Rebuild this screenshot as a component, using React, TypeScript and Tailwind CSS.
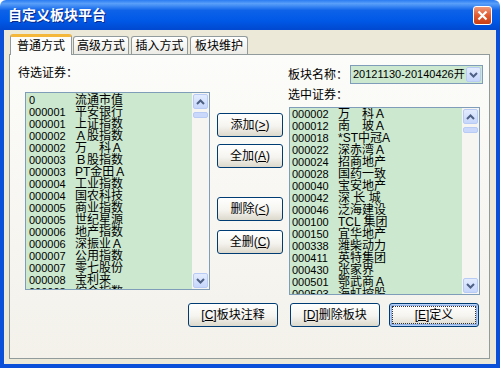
import type { ReactNode } from 'react';

const pending: [string, string][] = [
  ['0', '流通市值'],
  ['000001', '平安银行'],
  ['000001', '上证指数'],
  ['000002', 'Ａ股指数'],
  ['000002', '万　科Ａ'],
  ['000003', 'Ｂ股指数'],
  ['000003', 'PT金田Ａ'],
  ['000004', '工业指数'],
  ['000004', '国农科技'],
  ['000005', '商业指数'],
  ['000005', '世纪星源'],
  ['000006', '地产指数'],
  ['000006', '深振业Ａ'],
  ['000007', '公用指数'],
  ['000007', '零七股份'],
  ['000008', '宝利来'],
  ['000008', '综合指数'],
];

const selected: [string, string][] = [
  ['000002', '万　科Ａ'],
  ['000012', '南　玻Ａ'],
  ['000018', '*ST中冠A'],
  ['000022', '深赤湾Ａ'],
  ['000024', '招商地产'],
  ['000028', '国药一致'],
  ['000040', '宝安地产'],
  ['000042', '深 长 城'],
  ['000046', '泛海建设'],
  ['000100', 'TCL 集团'],
  ['000150', '宜华地产'],
  ['000338', '潍柴动力'],
  ['000411', '英特集团'],
  ['000430', '张家界'],
  ['000501', '鄂武商Ａ'],
  ['000503', '海虹控股'],
];

const Arrow = ({ up }: { up?: boolean }) => (
  <div className="flex h-[15px] w-[15px] items-center justify-center rounded-[2px] border border-[#B8CBF5] bg-[linear-gradient(to_bottom,#E3ECFE,#C6D6FB)]">
    <svg width="9" height="6" viewBox="0 0 9 6">
      <polyline
        points={up ? '1,5 4.5,1.5 8,5' : '1,1 4.5,4.5 8,1'}
        fill="none"
        stroke="#4D6185"
        strokeWidth="2"
      />
    </svg>
  </div>
);

const ScrollBar = () => (
  <div className="flex w-[17px] shrink-0 flex-col items-center bg-[#F6F5F1] pt-[1px] pb-[1px]">
    <Arrow up />
    <div className="mt-[3px] h-[6px] w-[15px] rounded-[2px] border border-[#B8CBF5] bg-[#C9D8FB]" />
    <div className="flex-1" />
    <Arrow />
  </div>
);

const ListBox = ({ rows, className, pad }: { rows: [string, string][]; className: string; pad: string }) => (
  <div className={`flex overflow-hidden border border-[#7F9DB9] bg-[#CCE8CF] ${className}`}>
    <div className={`flex-1 overflow-hidden ${pad}`}>
      {rows.map(([code, name], i) => (
        <div key={i} className="flex h-[12px] items-center leading-[12px]">
          <span className="w-[46px] shrink-0 text-[11px]">{code}</span>
          <span className="whitespace-nowrap text-[12px]">{name}</span>
        </div>
      ))}
    </div>
    <ScrollBar />
  </div>
);

const XPButton = ({ children, className, isDefault }: { children: ReactNode; className: string; isDefault?: boolean }) => (
  <div
    className={`flex h-[24px] items-center justify-center rounded-[3px] border border-[#003C74] bg-[linear-gradient(to_bottom,#FFFFFF,#F5F4EF_55%,#DCD8CC)] text-[12px] text-black ${
      isDefault ? 'p-[2px] shadow-[inset_0_0_0_1px_#B9D1F6,inset_0_0_0_2px_#8FB1E8]' : ''
    } ${className}`}
  >
    {isDefault ? (
      <div className="flex h-full w-full items-center justify-center border border-dotted border-[#333]">{children}</div>
    ) : (
      children
    )}
  </div>
);

export default function App() {
  return (
    <div className="flex h-[368px] w-[500px] flex-col overflow-hidden [font-family:'Liberation_Sans','Noto_Sans_CJK_SC',sans-serif] text-black">
      <div className="flex h-[30px] shrink-0 items-center justify-between rounded-t-[6px] bg-[linear-gradient(to_bottom,#2A7BF2_0%,#5AA0FA_12%,#0D62E8_35%,#0058E6_70%,#0048CF_100%)] pl-[8px] pr-[8px]">
        <span className="text-[14px] font-bold text-white [text-shadow:1px_1px_0_#0A2A8A]">自定义板块平台</span>
        <div className="flex h-[19px] w-[19px] items-center justify-center rounded-[3px] border border-white bg-[linear-gradient(to_bottom,#F09A7A,#E15A30_50%,#C93E14)]">
          <svg width="11" height="11" viewBox="0 0 11 11">
            <path d="M1.5 1.5 L9.5 9.5 M9.5 1.5 L1.5 9.5" stroke="white" strokeWidth="2.2" />
          </svg>
        </div>
      </div>

      <div className="flex flex-1 flex-col border-x-4 border-b-4 border-[#0A50D8] bg-[#ECE9D8] pl-[5px] pt-[4px]">
        <div className="relative z-10 flex items-end pl-[1px] text-[12px]">
          <div className="-mb-px flex h-[21px] w-[62px] items-center justify-center rounded-t-[3px] border border-b-0 border-[#919B9C] border-t-[3px] border-t-[#F5B73A] bg-[#FCFCFA]">
            普通方式
          </div>
          <div className="ml-[1px] flex h-[18px] w-[56px] items-center justify-center rounded-t-[3px] border border-b-0 border-[#919B9C] bg-[linear-gradient(to_bottom,#FFFFFF,#ECEBE5)]">
            高级方式
          </div>
          <div className="ml-[2px] flex h-[18px] w-[57px] items-center justify-center rounded-t-[3px] border border-b-0 border-[#919B9C] bg-[linear-gradient(to_bottom,#FFFFFF,#ECEBE5)]">
            插入方式
          </div>
          <div className="ml-[2px] flex h-[18px] w-[58px] items-center justify-center rounded-t-[3px] border border-b-0 border-[#919B9C] bg-[linear-gradient(to_bottom,#FFFFFF,#ECEBE5)]">
            板块维护
          </div>
        </div>

        <div className="h-[305px] w-[481px] border border-[#919B9C] bg-[linear-gradient(to_bottom,#FCFCFA,#F3F1EA)] text-[12px]">
          <div className="flex">
            <div className="w-[207px] shrink-0">
              <div className="ml-[8px] mt-[11px] h-[14px] leading-[14px]">待选证券：</div>
              <ListBox rows={pending} className="ml-[15px] mt-[12px] h-[198px] w-[185px]" pad="pl-[3px] pt-[1px]" />
            </div>

            <div className="flex w-[66px] shrink-0 flex-col pt-[58px]">
              <XPButton className="w-[66px]">
                添加(<u>&gt;</u>)
              </XPButton>
              <XPButton className="mt-[7px] w-[66px]">
                全加(<u>A</u>)
              </XPButton>
              <XPButton className="mt-[29px] w-[66px]">
                删除(<u>&lt;</u>)
              </XPButton>
              <XPButton className="mt-[9px] w-[66px]">
                全删(<u>C</u>)
              </XPButton>
            </div>

            <div className="ml-[4px] w-[196px] shrink-0">
              <div className="mt-[10px] flex h-[19px] items-center">
                <span className="ml-[1px]">板块名称：</span>
                <div className="ml-auto flex h-[19px] w-[133px] items-center overflow-hidden border border-[#7F9DB9] bg-[#CCE8CF]">
                  <span className="flex-1 overflow-hidden whitespace-nowrap pl-[2px] text-[11px] leading-[17px]">
                    20121130-20140426开
                  </span>
                  <div className="mr-[1px] flex h-[15px] w-[15px] shrink-0 items-center justify-center rounded-[2px] border border-[#B8CBF5] bg-[linear-gradient(to_bottom,#E3ECFE,#C6D6FB)]">
                    <svg width="9" height="6" viewBox="0 0 9 6">
                      <polyline points="1,1 4.5,4.5 8,1" fill="none" stroke="#4D6185" strokeWidth="2" />
                    </svg>
                  </div>
                </div>
              </div>
              <div className="ml-[1px] mt-[4px] h-[14px] leading-[14px]">选中证券：</div>
              <ListBox rows={selected} className="ml-[2px] mt-[5px] h-[188px] w-[191px]" pad="pl-[2px]" />
            </div>
          </div>

          <div className="mt-[8px] flex justify-end pr-[10px]">
            <XPButton className="mr-[12px] w-[90px]">
              [<u>C</u>]板块注释
            </XPButton>
            <XPButton className="mr-[9px] w-[90px]">
              [<u>D</u>]删除板块
            </XPButton>
            <XPButton className="w-[90px]" isDefault>
              [<u>E</u>]定义
            </XPButton>
          </div>
        </div>
      </div>
    </div>
  );
}
